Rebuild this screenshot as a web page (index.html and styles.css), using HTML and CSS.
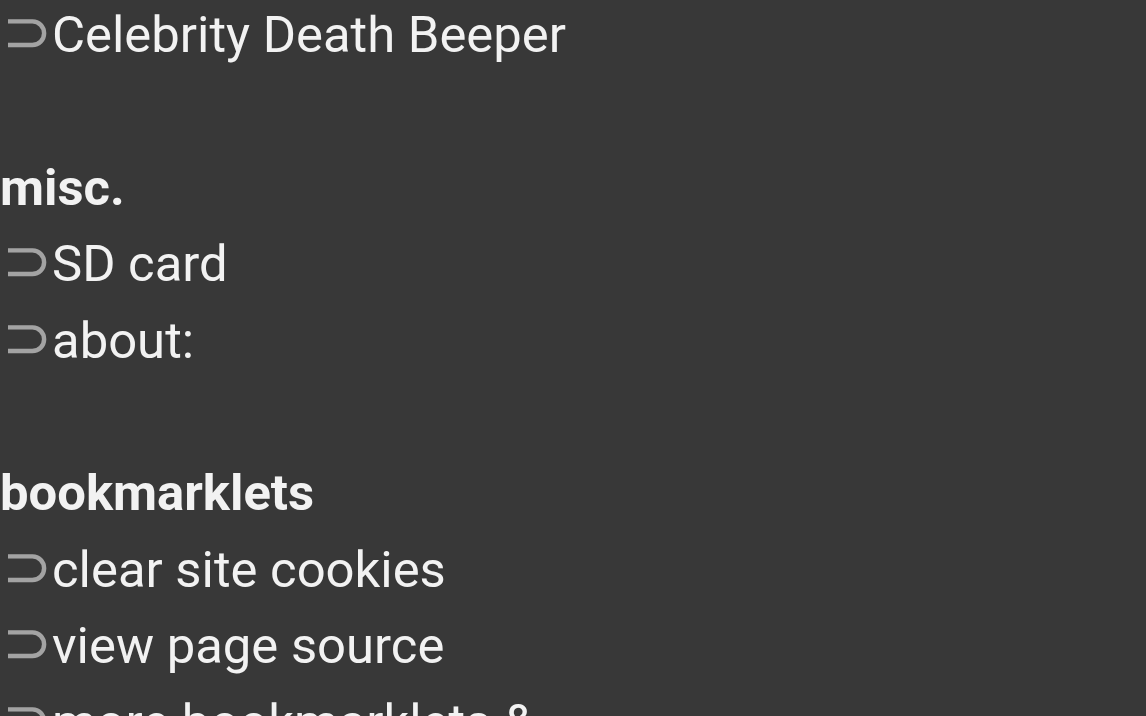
FILE: index.html
```html
<!DOCTYPE html>
<html lang="en">
<head>
    <meta charset="UTF-8">
    <meta name="viewport" content="width=device-width, initial-scale=1.0">
    <title>Links</title>
<link rel="stylesheet" href="styles.css">
</head>
<body>

<div class="links">
  <ul class="group">
    <li><a href="#"><span class="mark">&sup;</span>Celebrity Death Beeper</a></li>
  </ul>

  <div class="group">
    <h2>misc.</h2>
    <ul>
      <li><a href="#"><span class="mark">&sup;</span>SD card</a></li>
      <li><a href="#"><span class="mark">&sup;</span>about:</a></li>
    </ul>
  </div>

  <div class="group">
    <h2>bookmarklets</h2>
    <ul>
      <li><a href="#"><span class="mark">&sup;</span>clear site cookies</a></li>
      <li><a href="#"><span class="mark">&sup;</span>view page source</a></li>
      <li><a href="#"><span class="mark">&sup;</span>more bookmarklets &amp; tools</a></li>
    </ul>
  </div>
</div>

</body>
</html>
```

FILE: styles.css
```css
html, body {
  margin: 0;
  height: 100%;
  overflow: hidden;
}

body {
  background: #383838;
  color: #f2f2f2;
  font-family: Roboto, "Noto Sans", sans-serif;
  font-size: 50.8px;
  line-height: 76.4px;
}

.links {
  margin-top: -3px;
  width: 590px;
}

ul {
  list-style: none;
  margin: 0;
  padding: 0;
}

.group {
  margin: 0 0 76.4px 0;
}

.group:last-child {
  margin-bottom: 0;
}

h2 {
  margin: 0;
  font-size: 50.8px;
  font-weight: bold;
}

a {
  color: inherit;
  text-decoration: none;
}

.mark {
  display: inline-block;
  line-height: 60px;
  color: #a3a3a3;
  font-family: "DejaVu Sans", sans-serif;
  font-weight: 200;
  font-size: 60px;
  margin-left: 2px;
  margin-right: 0;
}
```
